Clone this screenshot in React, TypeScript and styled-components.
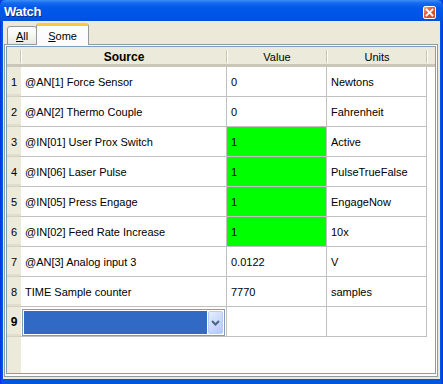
import styled, { createGlobalStyle } from "styled-components";

const GlobalStyle = createGlobalStyle`
    html, body {
        margin: 0;
        padding: 0;
        background: #ffffff;
    }
    * {
        box-sizing: border-box;
    }
`

interface WatchRow {
    source: string;
    value: string;
    units: string;
    active?: boolean;
}

const rows: WatchRow[] = [
    { source: '@AN[1] Force Sensor', value: '0', units: 'Newtons' },
    { source: '@AN[2] Thermo Couple', value: '0', units: 'Fahrenheit' },
    { source: '@IN[01] User Prox Switch', value: '1', units: 'Active', active: true },
    { source: '@IN[06] Laser Pulse', value: '1', units: 'PulseTrueFalse', active: true },
    { source: '@IN[05] Press Engage', value: '1', units: 'EngageNow', active: true },
    { source: '@IN[02] Feed Rate Increase', value: '1', units: '10x', active: true },
    { source: '@AN[3] Analog input 3', value: '0.0122', units: 'V' },
    { source: 'TIME Sample counter', value: '7770', units: 'samples' },
]

const Window = styled.div`
    width: 443px;
    height: 384px;
    display: flex;
    flex-direction: column;
    background: linear-gradient(to right, #0831d9 0px, #0055e5 2px, #0055e5 calc(100% - 2px), #0831d9 100%);
    font-family: "Liberation Sans", Arial, sans-serif;
    font-size: 11px;
    color: #000000;
`

const TitleBar = styled.div`
    height: 21px;
    min-height: 21px;
    display: flex;
    align-items: center;
    justify-content: space-between;
    padding: 0 7px 0 4px;
    background: linear-gradient(#3d8ff8 0px, #1669f0 3px, #0058e8 8px, #0055e5 16px, #0050da 21px);
    border-radius: 6px 6px 0 0;
`

const Title = styled.div`
    color: #ffffff;
    font-weight: 700;
    font-size: 13px;
    letter-spacing: -0.3px;
    text-shadow: 1px 1px 0 #0a2a8a;
    padding-top: 1px;
`

const CloseButton = styled.div`
    width: 13px;
    height: 13px;
    border: 1px solid #ffffff;
    border-radius: 2px;
    background: linear-gradient(135deg, #f4a080 0%, #e5582e 45%, #cf4420 100%);
    display: flex;
    align-items: center;
    justify-content: center;
    margin-top: 4px;
`

const Client = styled.div`
    flex: 1;
    margin: 0 3px 5px 3px;
    background: #ece9d8;
    display: flex;
    flex-direction: column;
    padding: 2px 2px 2px 1px;
`

const TabStrip = styled.div`
    height: 22px;
    display: flex;
    align-items: flex-end;
    padding-left: 3px;
    position: relative;
    z-index: 1;
    margin-bottom: -1px;
`

const Tab = styled.div<{ $selected?: boolean }>`
    height: ${p => (p.$selected ? 22 : 19)}px;
    padding: 0 ${p => (p.$selected ? 11 : 8)}px;
    display: flex;
    align-items: center;
    justify-content: center;
    border: 1px solid #919b9c;
    border-bottom: ${p => (p.$selected ? 'none' : '1px solid #919b9c')};
    border-radius: 3px 3px 0 0;
    background: ${p => (p.$selected ? '#fcfcfe' : 'linear-gradient(#ffffff, #f3f3ef 60%, #e8e8e0)')};
    border-top: ${p => (p.$selected ? '3px solid #ffc83c' : '1px solid #919b9c')};
    margin-left: ${p => (p.$selected ? -1 : 0)}px;
    font-size: 11px;
    padding-top: ${p => (p.$selected ? 0 : 1)}px;
`

const Underline = styled.span`
    text-decoration: underline;
`

const Panel = styled.div`
    flex: 1;
    border: 1px solid #919b9c;
    background: #fcfcfe;
    display: flex;
    padding: 1px 1px 2px 1px;
`

const Grid = styled.div`
    flex: 1;
    border: 1px solid #7f9db9;
    background: #ffffff;
    display: flex;
    flex-direction: column;
    overflow: hidden;
`

const HeaderRow = styled.div`
    height: 20px;
    display: flex;
    background: #ebeadb;
    border-bottom: 3px solid;
    border-image: linear-gradient(#e2decd, #d6d2c2 33%, #cbc7b8 66%, #cbc7b8) 1;
`

const HeadCell = styled.div<{ $width: number; $bold?: boolean }>`
    width: ${p => p.$width}px;
    display: flex;
    align-items: center;
    justify-content: center;
    font-weight: ${p => (p.$bold ? 700 : 400)};
    font-size: ${p => (p.$bold ? 12 : 11)}px;
    position: relative;
    padding-top: 3px;
    &::after {
        content: '';
        position: absolute;
        right: 0;
        top: 3px;
        bottom: 1px;
        width: 1px;
        background: #c7c5b2;
        box-shadow: 1px 0 0 #ffffff;
    }
`

const HeadFill = styled.div`
    flex: 1;
`

const Row = styled.div`
    height: 30px;
    display: flex;
`

const RowHead = styled.div<{ $current?: boolean }>`
    width: 14px;
    display: flex;
    align-items: center;
    justify-content: center;
    background: #ebeadb;
    border-bottom: 1px solid #d6d2c2;
    box-shadow: inset 0 -2px 0 #e2decd;
    font-weight: ${p => (p.$current ? 700 : 400)};
    font-size: ${p => (p.$current ? 12 : 11)}px;
    padding-top: 1px;
`

const Cell = styled.div<{ $width: number; $active?: boolean }>`
    width: ${p => p.$width}px;
    display: flex;
    align-items: center;
    padding: 1px 0 0 4px;
    border-right: 1px solid #c0c0c0;
    border-bottom: 1px solid #c0c0c0;
    background: ${p => (p.$active ? '#00ff00' : 'transparent')};
    white-space: nowrap;
    overflow: hidden;
`

const EditCell = styled.div`
    width: 206px;
    padding: 2px 1px 0 1px;
    border-right: 1px solid #c0c0c0;
    border-bottom: 1px solid #c0c0c0;
    display: flex;
`

const Combo = styled.div`
    flex: 1;
    display: flex;
    border: 1px solid #7f9db9;
    padding: 1px;
    background: #ffffff;
`

const ComboText = styled.div`
    flex: 1;
    background: #316ac5;
`

const ComboButton = styled.div`
    width: 15px;
    margin-left: 1px;
    border: 1px solid #b6cbf5;
    border-radius: 2px;
    background: linear-gradient(135deg, #e6eefc 0%, #c6d7fb 60%, #b4c8f6 100%);
    display: flex;
    align-items: center;
    justify-content: center;
`

const Filler = styled.div`
    flex: 1;
    display: flex;
`

const FillerHead = styled.div`
    width: 14px;
    background: #ebeadb;
`

const ColWidths = { head: 14, source: 206, value: 100, units: 100 }

export default function App() {
    return (
        <>
            <GlobalStyle />
            <Window>
                <TitleBar>
                    <Title>Watch</Title>
                    <CloseButton>
                        <svg width="9" height="9" viewBox="0 0 9 9">
                            <path d="M1.5 1.5 L7.5 7.5 M7.5 1.5 L1.5 7.5" stroke="#ffffff" strokeWidth="1.8" strokeLinecap="square" />
                        </svg>
                    </CloseButton>
                </TitleBar>
                <Client>
                    <TabStrip>
                        <Tab><Underline>A</Underline>ll</Tab>
                        <Tab $selected><Underline>S</Underline>ome</Tab>
                    </TabStrip>
                    <Panel>
                        <Grid>
                            <HeaderRow>
                                <HeadCell $width={ColWidths.head} />
                                <HeadCell $width={ColWidths.source} $bold>Source</HeadCell>
                                <HeadCell $width={ColWidths.value}>Value</HeadCell>
                                <HeadCell $width={ColWidths.units}>Units</HeadCell>
                                <HeadFill />
                            </HeaderRow>
                            {rows.map((r, i) => (
                                <Row key={i}>
                                    <RowHead>{i + 1}</RowHead>
                                    <Cell $width={ColWidths.source}>{r.source}</Cell>
                                    <Cell $width={ColWidths.value} $active={r.active}>{r.value}</Cell>
                                    <Cell $width={ColWidths.units}>{r.units}</Cell>
                                </Row>
                            ))}
                            <Row>
                                <RowHead $current>9</RowHead>
                                <EditCell>
                                    <Combo>
                                        <ComboText />
                                        <ComboButton>
                                            <svg width="9" height="6" viewBox="0 0 9 6">
                                                <path d="M1 1 L4.5 4.5 L8 1" fill="none" stroke="#4d6185" strokeWidth="2" />
                                            </svg>
                                        </ComboButton>
                                    </Combo>
                                </EditCell>
                                <Cell $width={ColWidths.value} />
                                <Cell $width={ColWidths.units} />
                            </Row>
                            <Filler>
                                <FillerHead />
                            </Filler>
                        </Grid>
                    </Panel>
                </Client>
            </Window>
        </>
    )
}
